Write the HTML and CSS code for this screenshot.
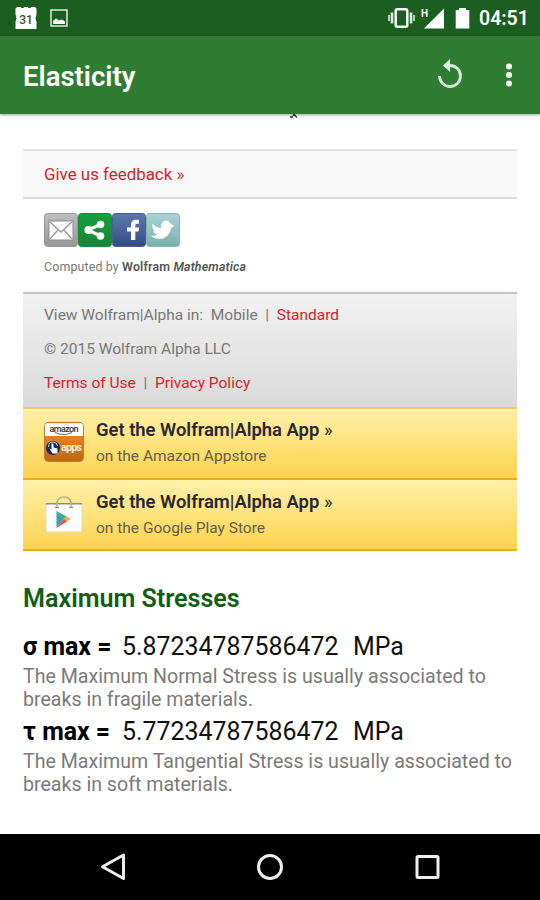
FILE: index.html
```html
<!DOCTYPE html>
<html lang="en">
    <head>
        <meta charset="UTF-8">
        <title>Elasticity</title>
        <link rel="stylesheet" href="styles.css">
    </head>
    <body>
        <div class="status-bar">
            <svg class="calendar" width="24" height="24" viewBox="0 0 24 24">
                <path d="M3 1h3.500l1 1h2l1-1h3l1 1h2l1-1H21l1.500 1.500v6L21.500 12l1 4v7h-21v-7l1-4-1-3.500v-6z" fill="#fff"/>
                <text x="12" y="18.3" text-anchor="middle">31</text>
            </svg>
            <svg class="picture" width="18" height="18" viewBox="0 0 18 18">
                <rect x="1" y="1" width="16" height="16" fill="none" stroke="#d3e4d3" stroke-width="1.6"/>
                <path d="M3 12l3-2.500 3 2 3-1 3 2V15H3z" fill="#fff"/>
            </svg>
            <span class="spacer"></span>
            <svg class="vibrate" width="27" height="20" viewBox="0 0 27 20">
                <rect x="7.7" y="1.2" width="11.6" height="17.6" rx="1.5" fill="none" stroke="#fff" stroke-width="2.4"/>
                <path d="M4 4.500v11M23 4.500v11" stroke="#dceadc" stroke-width="2.6"/>
                <path d="M1 7v6M26 7v6" stroke="#c5dac5" stroke-width="1.8"/>
            </svg>
            <svg class="signal" width="24" height="22" viewBox="0 0 24 22">
                <path d="M23 1.500v20H3z" fill="#fff"/>
                <text x="0" y="9.500">H</text>
            </svg>
            <svg class="battery" width="15" height="22" viewBox="0 0 15 22">
                <path d="M4 1h7v2h3.3v18.500H.7V3H4z" fill="#fff"/>
            </svg>
            <span class="clock">04:51</span>
        </div>
        <header class="app-bar">
            <h1>Elasticity</h1>
            <svg class="reset" width="26" height="30" viewBox="0 0 26 30">
                <path d="M2.500 17A10.500 10.500 0 1 0 13 6.500" fill="none" stroke="#d5e8d5" stroke-width="2.8"/>
                <path d="M13 0v13L6 6.500z" fill="#e3f0e3"/>
            </svg>
            <svg class="menu" width="8" height="26" viewBox="0 0 8 26" fill="#fff">
                <circle cx="4" cy="4.500" r="3"/>
                <circle cx="4" cy="13" r="3"/>
                <circle cx="4" cy="21.500" r="3"/>
            </svg>
        </header>
        <main>
            <div class="plot-end">
                <svg width="8" height="4" viewBox="0 0 8 4"><path d="M0 3h3M4 .5l3 3M4 .5L3 2" stroke="#333" stroke-width="1.400" fill="none"/></svg>
            </div>
            <section class="wolfram">
                <div class="feedback"><a href="#">Give us feedback »</a></div>
                <div class="share">
                    <svg width="136" height="34" viewBox="0 0 136 34">
                        <defs>
                            <linearGradient id="mail" x2="0" y2="1"><stop stop-color="#bebebe"/><stop offset="1" stop-color="#989898"/></linearGradient>
                            <linearGradient id="green" x2="0" y2="1"><stop stop-color="#15a03c"/><stop offset="1" stop-color="#168536"/></linearGradient>
                            <linearGradient id="blue" x2="0" y2="1"><stop stop-color="#5b79ad"/><stop offset="1" stop-color="#354a84"/></linearGradient>
                            <linearGradient id="teal" x2="0" y2="1"><stop stop-color="#abd4d5"/><stop offset="1" stop-color="#78b0b0"/></linearGradient>
                        </defs>
                        <rect x=".5" y=".5" width="33" height="33" rx="3" fill="url(#mail)" stroke="#999"/>
                        <rect x="34.500" y=".5" width="33" height="33" rx="3" fill="url(#green)" stroke="#1a8a3a"/>
                        <rect x="68.500" y=".5" width="33" height="33" rx="3" fill="url(#blue)" stroke="#465f93"/>
                        <rect x="102.500" y=".5" width="33" height="33" rx="3" fill="url(#teal)" stroke="#83b5b5"/>
                        <rect x="5" y="8" width="24" height="19" fill="#fff" stroke="#8c8c8c"/>
                        <path d="M6 9l11 10L28 9M6 26l8-9M28 26l-8-9" fill="none" stroke="#999" stroke-width="1.3"/>
                        <path d="M56.500 11.500L44 17l12.500 6" fill="none" stroke="#fff" stroke-width="3.200"/>
                        <g fill="#fff">
                            <circle cx="56.500" cy="11.500" r="3.800"/>
                            <circle cx="44.500" cy="17" r="4"/>
                            <circle cx="56.500" cy="23" r="3.800"/>
                            <path d="M87 27V18.500H83V14.500h4v-2.200c0-3.800 2.200-5.500 5-5.500h3v4h-2c-1.200 0-1.700.6-1.700 1.800v1.900H95l-.5 4h-3.200V27z"/>
                            <path d="M107 22.500c3 .8 5-.2 6-1.300-2.200-.4-3.500-1.600-4-3l2-.2c-2.300-1.300-3.200-5.500-2.500-7.500 3.200 3.500 5.500 4.500 8.500 4.700-.3-4.500 2-7.700 5-7.700 1.800 0 2.800.8 3.700 2.600l4.300 2.700-2.800 2.200c-1.200 6-5.200 11-11.700 11-4 0-6.800-1.500-8.500-3.500z"/>
                        </g>
                    </svg>
                </div>
                <p class="computed">Computed by <b>Wolfram <i>Mathematica</i></b></p>
                <footer class="site-info">
                    <p>View Wolfram|Alpha in: &nbsp;Mobile &nbsp;|&nbsp; <a href="#">Standard</a></p>
                    <p>© 2015 Wolfram Alpha LLC</p>
                    <p><a href="#">Terms of Use</a> &nbsp;|&nbsp; <a href="#">Privacy Policy</a></p>
                </footer>
                <div class="store">
                    <svg width="40" height="40" viewBox="0 0 40 40">
                        <defs>
                            <linearGradient id="orange" x2="0" y2="1"><stop stop-color="#f3952e"/><stop offset="1" stop-color="#bf6510"/></linearGradient>
                        </defs>
                        <rect x=".5" y=".5" width="39" height="39" rx="4" fill="url(#orange)" stroke="#bd7b35"/>
                        <path d="M1 14V4q0-3 3-3h32q3 0 3 3v10z" fill="#fff"/>
                        <text class="brand" x="5.500" y="9.500" textLength="29">amazon</text>
                        <path d="M11 10.500q9 4 17 0" fill="none" stroke="#777" stroke-width="1.200"/>
                        <circle cx="9" cy="26" r="7" fill="#18295c"/>
                        <path d="M7.500 21.500v6l-2-1 3 5h5v-5l-4-1v-4z" fill="#fff"/>
                        <path d="M4.500 25q0-5 4.500-5 4 0 4.500 4" fill="none" stroke="#c9d5f2"/>
                        <text class="apps" x="17" y="29" textLength="21">apps</text>
                    </svg>
                    <div class="store-text">
                        <a href="#">Get the Wolfram|Alpha App <span>»</span></a>
                        <p>on the Amazon Appstore</p>
                    </div>
                </div>
                <div class="store play">
                    <svg width="40" height="40" viewBox="0 0 40 40">
                        <path d="M2 9.500h36v28.500H2z" fill="#fcfcfc" stroke="#dfd6bd" stroke-width=".8"/>
                        <path d="M2 9.800h36" stroke="#8d8a88" stroke-width="1.500"/>
                        <path d="M13 13V10q0-7 7-7t7 7v3" fill="none" stroke="#b5b0a5" stroke-width="1.600"/>
                        <path d="M11 13.500h4M25 13.500h4" stroke="#888"/>
                        <path d="M12.500 17l7.500 8-7.500 9z" fill="#3e9fb4"/>
                        <path d="M12.500 17l10 5.500-2.500 2.800z" fill="#45a878"/>
                        <path d="M22.500 22.300l4.500 2.700-4.500 2.600-3-2.400z" fill="#efb14c"/>
                        <path d="M20 25l3 2.600L12.500 34z" fill="#e0574e"/>
                    </svg>
                    <div class="store-text">
                        <a href="#">Get the Wolfram|Alpha App <span>»</span></a>
                        <p>on the Google Play Store</p>
                    </div>
                </div>
            </section>
            <section class="results">
                <h2>Maximum Stresses</h2>
                <div class="value"><b class="sigma">σ max =</b><span class="number">5.87234787586472</span><span>MPa</span></div>
                <p>The Maximum Normal Stress is usually associated to<br>breaks in fragile materials.</p>
                <div class="value"><b class="tau">τ max =</b><span class="number">5.77234787586472</span><span>MPa</span></div>
                <p>The Maximum Tangential Stress is usually associated to<br>breaks in soft materials.</p>
            </section>
        </main>
        <nav class="nav-bar">
            <svg width="28" height="30" viewBox="0 0 28 30"><path d="M24.500 3v23.500L3.500 14.700z"/></svg>
            <svg width="28" height="30" viewBox="0 0 28 30"><circle cx="14" cy="15" r="11.500"/></svg>
            <svg width="28" height="30" viewBox="0 0 28 30"><rect x="4" y="4.500" width="21" height="21" rx="1"/></svg>
        </nav>
    </body>
</html>
```
FILE: styles.css
```css
:root {
    --dark-green: #1b5e20;
    --green: #2e7d32;
    --link-red: #d81e25;
}

* {
    box-sizing: border-box;
}

body {
    margin: 0;
    width: 540px;
    height: 900px;
    display: flex;
    flex-direction: column;
    overflow: hidden;
    background-color: #fff;
    font-family: Roboto, "Liberation Sans", sans-serif;
}

h1, h2, p {
    margin: 0;
}

svg {
    display: block;
    flex: none;
}

a {
    color: var(--link-red);
    text-decoration: none;
}

.status-bar {
    height: 36px;
    flex: none;
    display: flex;
    align-items: center;
    padding: 0 12px 0 14px;
    background-color: var(--dark-green);
    color: #fff;
}

.calendar text {
    font-size: 12px;
    font-weight: 500;
    fill: #35513a;
}

.picture {
    margin-left: 12px;
}

.spacer {
    flex: 1;
}

.vibrate {
    margin-right: 6px;
}

.signal text {
    font-size: 10px;
    font-weight: 700;
    fill: #fff;
}

.battery {
    margin: 0 9px 0 10px;
}

.clock {
    width: 49px;
    padding-top: 1px;
    font-size: 19.5px;
    font-weight: 600;
    white-space: nowrap;
}

.app-bar {
    height: 78px;
    flex: none;
    display: flex;
    align-items: center;
    padding: 0 27px 0 23px;
    background-color: var(--green);
    box-shadow: 0 1px 3px rgba(0, 0, 0, .4);
    z-index: 1;
}

h1 {
    flex: 1;
    padding-top: 3px;
    color: #fff;
    font-size: 27.5px;
    font-weight: 600;
}

.reset {
    margin: -3px 42px 0 0;
}

main {
    flex: 1;
    padding: 0 23px;
}

.plot-end {
    height: 35px;
    padding-left: 267px;
}

.wolfram {
    width: 494px;
    color: #777;
}

.feedback {
    height: 50px;
    padding: 0 21px;
    border-top: 2px solid #e0e0e0;
    border-bottom: 2px solid #dcdcdc;
    background-color: #f9f9f9;
    font-size: 16.9px;
    line-height: 46px;
}

.share {
    padding: 14px 0 0 21px;
}

.computed {
    height: 45px;
    padding: 10px 0 0 21px;
    font-size: 12.4px;
    letter-spacing: .15px;
    line-height: 20px;
}

.computed b {
    color: #555;
    font-weight: 600;
}

.site-info {
    height: 115px;
    padding: 4px 21px 0;
    border-top: 2px solid #c4c4c4;
    background: linear-gradient(#f2f2f2, #dadada);
    font-size: 15.5px;
    line-height: 34px;
}

.store {
    height: 73px;
    display: flex;
    gap: 12px;
    padding: 13px 21px 0;
    border-top: 2px solid #f4c85e;
    border-bottom: 2px solid #f0aa17;
    background: linear-gradient(#fff1a8, #fed350);
}

.play {
    height: 71px;
    border-top: none;
    padding-top: 14px;
}

.store-text {
    margin-top: -5px;
}

.store a {
    display: block;
    color: #29282e;
    font-size: 18.4px;
    font-weight: 600;
    line-height: 26px;
}

.store a span {
    font-weight: 400;
}

.store p {
    color: #665d43;
    font-size: 15.5px;
    line-height: 26px;
}

.brand {
    font-size: 9px;
    font-weight: 500;
    fill: #333;
}

.apps {
    font-size: 11px;
    font-weight: 700;
    fill: #ffe8cf;
}

.results h2 {
    margin-top: 31px;
    color: #0e5f12;
    font-size: 25.100px;
    font-weight: 600;
    line-height: 34px;
}

.value {
    display: flex;
    height: 31px;
    color: #111;
    font-size: 24.9px;
    line-height: 31px;
}

.results h2 + .value {
    margin-top: 15px;
}

.value b {
    width: 99px;
    color: #000;
    font-weight: 700;
}

.value .number {
    width: 231px;
}

.results p {
    height: 54px;
    padding-top: 3px;
    color: #7a7a7a;
    font-size: 19.6px;
    line-height: 23px;
    white-space: nowrap;
}

.nav-bar {
    height: 66px;
    flex: none;
    display: flex;
    justify-content: center;
    gap: 129px;
    padding-top: 18px;
    background-color: #000;
}

.nav-bar svg {
    fill: none;
    stroke: #eee;
    stroke-width: 3;
    stroke-linejoin: round;
}
```
